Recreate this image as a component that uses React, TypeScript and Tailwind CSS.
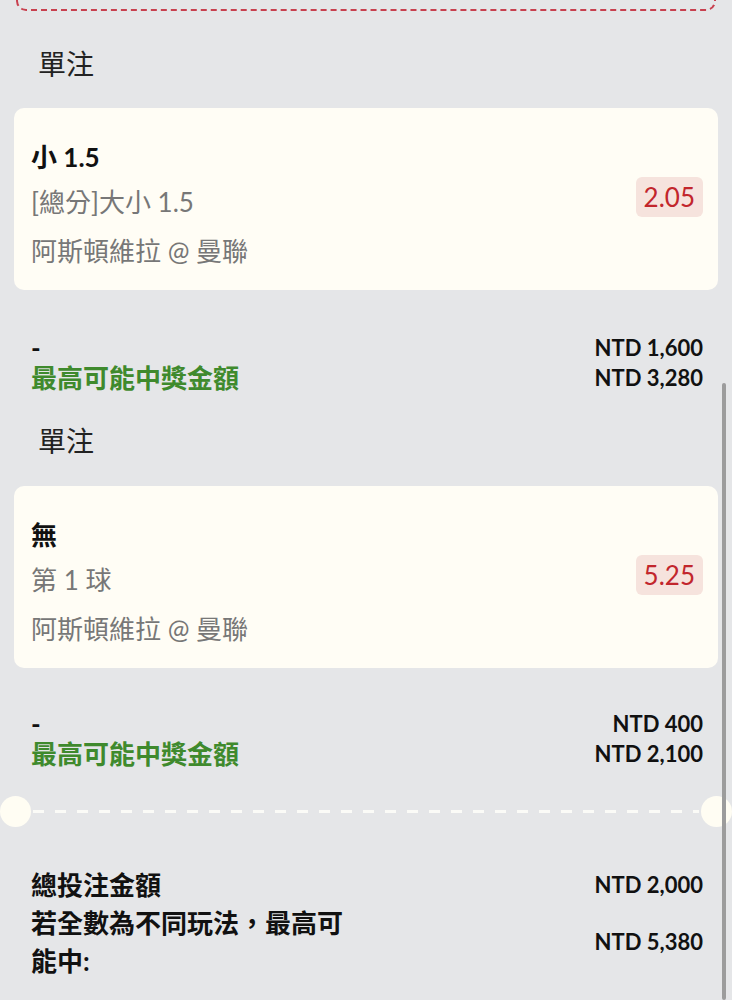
import React from "react";

const FONT = "font-['Lato','Noto_Sans_CJK_TC',sans-serif]";

function BetCard({ title, market, teams, odds }: { title: string; market: string; teams: string; odds: string }) {
  return (
    <div className="flex items-center justify-between rounded-[10px] bg-[#fffdf5] pl-[17px] pr-[15px] pt-[31px] pb-[21px]">
      <div>
        <div className="text-[26px] leading-[36px] font-bold text-[#111]">{title}</div>
        <div className="mt-[9px] text-[26px] leading-[36px] text-[#777]">{market}</div>
        <div className="mt-[13px] text-[26px] leading-[36px] text-[#777]">{teams}</div>
      </div>
      <div className="mb-[15px] h-[40px] rounded-[6px] bg-[#f6e3dd] px-[8px] text-[26px] leading-[40px] text-[#c2262c]">{odds}</div>
    </div>
  );
}

function Amounts({ stake, win }: { stake: string; win: string }) {
  return (
    <div className="flex justify-between pl-[17px] pr-[15px]">
      <div className="font-bold">
        <div className="text-[26px] leading-[30px] text-[#111]">-</div>
        <div className="text-[26px] leading-[30px] text-[#3f8a2d]">最高可能中獎金額</div>
      </div>
      <div className="text-right text-[22px] font-bold text-[#111]">
        <div className="leading-[30px]">{stake}</div>
        <div className="leading-[30px]">{win}</div>
      </div>
    </div>
  );
}

export default function App() {
  return (
    <div className={`relative h-[1000px] overflow-hidden bg-[#e5e6e8] ${FONT}`}>
      <div className="px-[14px]">
        <div className="mx-[2px] -mt-[30px] h-[41px] rounded-[10px] border-2 border-dashed border-[#c8404f]" />
        <div className="mt-[33px] pl-[24px] text-[28px] leading-[40px] text-[#222]">單注</div>
        <div className="mt-[24px]">
          <BetCard title="小 1.5" market="[總分]大小 1.5" teams="阿斯頓維拉 @ 曼聯" odds="2.05" />
        </div>
        <div className="mt-[43px]">
          <Amounts stake="NTD 1,600" win="NTD 3,280" />
        </div>
        <div className="mt-[28px] pl-[24px] text-[28px] leading-[40px] text-[#222]">單注</div>
        <div className="mt-[25px]">
          <BetCard title="無" market="第 1 球" teams="阿斯頓維拉 @ 曼聯" odds="5.25" />
        </div>
        <div className="mt-[41px]">
          <Amounts stake="NTD 400" win="NTD 2,100" />
        </div>
      </div>

      <div className="mt-[26px] flex h-[32px] items-center">
        <div className="h-[31px] w-[31px] shrink-0 rounded-full bg-[#fffdf3]" />
        <div className="mx-[2px] h-[3px] flex-1 bg-[repeating-linear-gradient(90deg,#fbfbf7_0px,#fbfbf7_11px,transparent_11px,transparent_22px)]" />
        <div className="h-[31px] w-[31px] shrink-0 rounded-full bg-[#fffdf3]" />
      </div>

      <div className="mt-[39px] px-[14px]">
        <div className="flex items-center justify-between pl-[17px] pr-[15px]">
          <div className="text-[26px] leading-[38px] font-bold text-[#111]">總投注金額</div>
          <div className="text-[22px] leading-[38px] font-bold text-[#111]">NTD 2,000</div>
        </div>
        <div className="flex items-center justify-between pl-[17px] pr-[15px]">
          <div className="w-[330px] text-[26px] leading-[38px] font-bold text-[#111]">若全數為不同玩法，最高可能中:</div>
          <div className="text-[22px] leading-[38px] font-bold text-[#111]">NTD 5,380</div>
        </div>
      </div>

      <div className="absolute left-[722px] top-[383px] bottom-0 w-[4px] rounded-full bg-[#9c9c9c]" />
    </div>
  );
}
